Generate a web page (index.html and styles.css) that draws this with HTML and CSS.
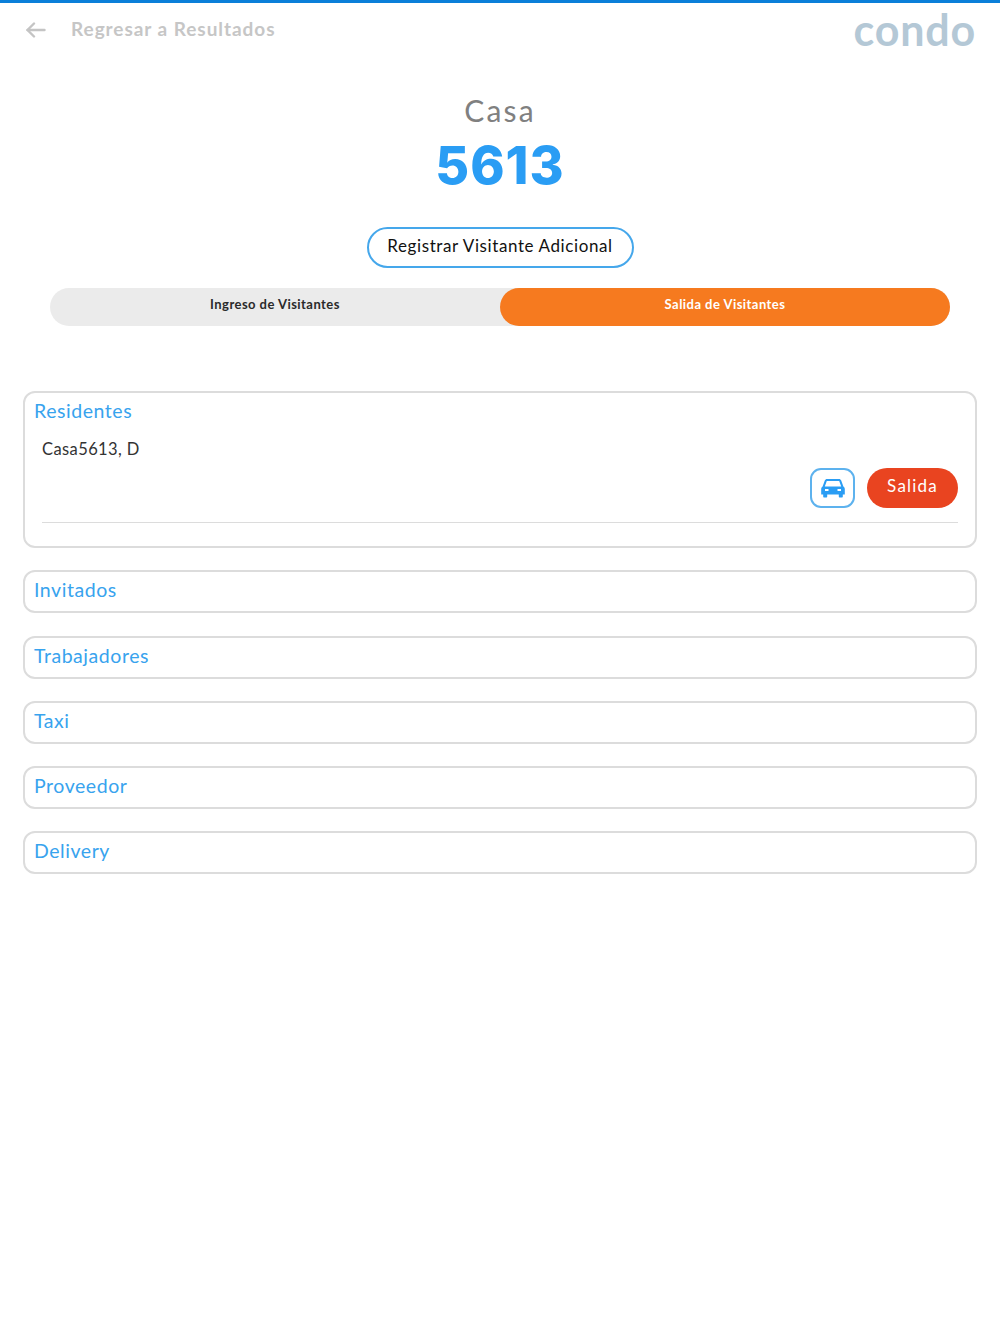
FILE: index.html
```html
<!DOCTYPE html>
<html lang="es">
<head>
    <meta charset="UTF-8">
    <meta name="viewport" content="width=device-width, initial-scale=1.0">
    <title>Casa 5613</title>
    <link rel="stylesheet" href="styles.css">
</head>
<body>
    <header class="topbar">
        <a class="back-link">
            <svg class="back-icon" width="20" height="16" viewBox="0 0 20 16" fill="none" stroke="#c4c4c4" stroke-width="2.4" stroke-linecap="round" stroke-linejoin="round">
                <path d="M1.5 8H18.5"/>
                <path d="M8 1.5L1.5 8L8 14.5"/>
            </svg>
            <span class="back-text">Regresar a Resultados</span>
        </a>
        <div class="logo">condo</div>
    </header>

    <section class="house">
        <div class="house-label">Casa</div>
        <div class="house-number">5613</div>
        <button class="add-visitor" type="button">Registrar Visitante Adicional</button>
    </section>

    <div class="tabs">
        <div class="tab">Ingreso de Visitantes</div>
        <div class="tab tab-active">Salida de Visitantes</div>
    </div>

    <main class="groups">
        <section class="group group-open">
            <h2 class="group-title">Residentes</h2>
            <div class="resident-name">Casa5613, D</div>
            <div class="resident-actions">
                <button class="car-button" type="button" aria-label="Vehículo">
                    <svg width="24" height="20" viewBox="0 0 24 20" fill="#2a9df4">
                        <path fill-rule="evenodd" d="M6 1h12c1 0 1.800.6 2.200 1.500L22.400 8.500c.8.6 1.400 1.500 1.400 2.500v5.500h-2v2c0 .6-.4 1-1 1h-2c-.6 0-1-.4-1-1v-2H6.200v2c0 .6-.4 1-1 1h-2c-.6 0-1-.4-1-1v-2h-2V11c0-1 .6-1.900 1.400-2.500L3.800 2.500C4.200 1.600 5 1 6 1zM6.200 3c-.3 0-.5.200-.6.400L3.800 8.500h16.400l-1.800-5.100c-.1-.2-.3-.4-.6-.4H6.200zM4 11v2h3.500v-2H4zm12.500 0v2H20v-2h-3.500z"/>
                    </svg>
                </button>
                <button class="exit-button" type="button">Salida</button>
            </div>
            <div class="resident-line"></div>
        </section>
        <section class="group"><h2 class="group-title">Invitados</h2></section>
        <section class="group"><h2 class="group-title">Trabajadores</h2></section>
        <section class="group"><h2 class="group-title">Taxi</h2></section>
        <section class="group"><h2 class="group-title">Proveedor</h2></section>
        <section class="group"><h2 class="group-title">Delivery</h2></section>
    </main>
</body>
</html>
```
FILE: styles.css
```css
body {
    margin: 0;
    background-color: #fff;
    font-family: "Lato", "Liberation Sans", sans-serif;
    border-top: 3px solid #0a7fd9;
    color: #222;
}

button {
    font-family: inherit;
}

.topbar {
    display: flex;
    justify-content: space-between;
    align-items: center;
    height: 54px;
    padding: 0 24px 0 26px;
}

.back-link {
    display: flex;
    align-items: center;
    gap: 25px;
    color: #c6c6c6;
    font-size: 19px;
    letter-spacing: 0.95px;
    font-weight: 700;
}

.back-text {
    padding-bottom: 3px;
}

.logo {
    color: #b4c8d6;
    font-size: 43px;
    font-weight: 700;
    line-height: 54px;
    letter-spacing: 0.8px;
}

.house {
    display: flex;
    flex-direction: column;
    align-items: center;
    padding-top: 33px;
}

.house-label {
    color: #808080;
    font-size: 30px;
    line-height: 40px;
    letter-spacing: 2.2px;
}

.house-number {
    padding-top: 2px;
    color: #2a9df4;
    font-family: "Inter", "Liberation Sans", sans-serif;
    font-size: 52px;
    font-weight: 800;
    line-height: 68px;
    letter-spacing: 1px;
}

.add-visitor {
    width: 267px;
    height: 41px;
    margin-top: 27px;
    padding: 0 0 4px;
    background-color: #fff;
    border: 2px solid #45a7eb;
    border-radius: 21px;
    color: #111;
    font-size: 17px;
    letter-spacing: 0.6px;
}

.tabs {
    display: flex;
    height: 38px;
    margin: 20px 50px 0;
    background-color: #ebebeb;
    border-radius: 19px;
}

.tab {
    flex: 1;
    padding-top: 7px;
    text-align: center;
    font-size: 13px;
    font-weight: 700;
    line-height: 18px;
    letter-spacing: 0.45px;
    color: #2a2a2a;
}

.tab-active {
    background-color: #f67a1f;
    border-radius: 19px;
    color: #fff;
}

.groups {
    display: flex;
    flex-direction: column;
    gap: 22.25px;
    margin: 65px 23px 0;
}

.group {
    height: 43px;
    box-sizing: border-box;
    padding: 0 9px;
    border: 2px solid #dcdcdc;
    border-radius: 12px;
}

.group-open {
    height: 157px;
}

.group-title {
    margin: 0;
    color: #38a3ee;
    font-size: 19.5px;
    font-weight: 400;
    line-height: 36px;
    letter-spacing: 0.55px;
}

.resident-name {
    margin: 1px 0 0 8px;
    font-size: 16.5px;
    line-height: 38px;
    letter-spacing: 0.4px;
    color: #333;
}

.resident-actions {
    display: flex;
    justify-content: flex-end;
    align-items: center;
    gap: 12px;
    margin-right: 8px;
}

.car-button {
    display: flex;
    align-items: center;
    justify-content: center;
    width: 45px;
    height: 40px;
    padding: 0;
    background-color: #fff;
    border: 2px solid #5db2ee;
    border-radius: 11px;
}

.exit-button {
    width: 91px;
    height: 40px;
    padding: 0 0 5px;
    background-color: #e94420;
    border: none;
    border-radius: 20px;
    color: #fff;
    font-size: 17px;
    letter-spacing: 1.2px;
}

.resident-line {
    margin: 14px 8px 0 8px;
    border-top: 1px solid #dcdcdc;
}
```
